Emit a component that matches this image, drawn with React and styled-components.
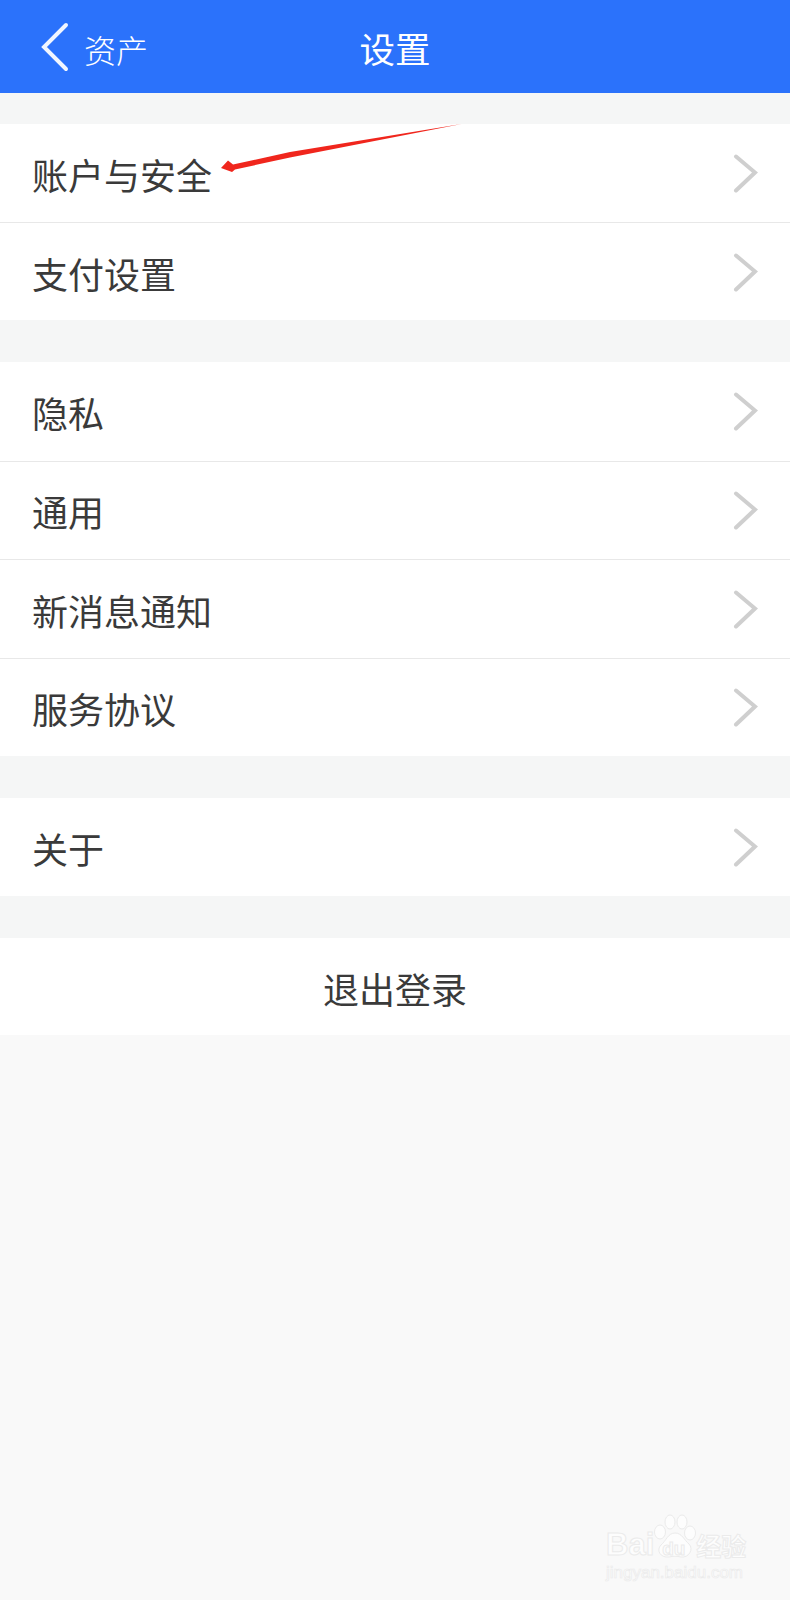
import React from 'react';
import styled, { createGlobalStyle } from 'styled-components';

const GlobalStyle = createGlobalStyle`
  html, body {
    margin: 0;
    padding: 0;
    background: #f9f9f9;
  }
`;

const Page = styled.div`
  position: relative;
  width: 790px;
  height: 1600px;
  overflow: hidden;
  background: #f9f9f9;
  font-family: "Noto Sans CJK SC", "Liberation Sans", sans-serif;
  color: #3a3a3a;
`;

const Header = styled.header`
  display: grid;
  grid-template-columns: 1fr auto 1fr;
  align-items: center;
  height: 93px;
  padding-left: 40px;
  padding-right: 40px;
  background: #2b72fb;
  box-shadow: 0 1px 2px rgba(60, 90, 160, 0.25);
  color: #fff;
`;

const BackLink = styled.div`
  display: flex;
  align-items: center;
  gap: 14px;
  font-size: 32px;
  font-weight: 300;
  line-height: 1;
`;

const BackLabel = styled.span`
  margin-top: 5px;
`;

const Title = styled.div`
  font-size: 35.5px;
  font-weight: 400;
  line-height: 1;
  margin-top: 3px;
`;

const Content = styled.div`
  display: flex;
  flex-direction: column;
  background: #f5f6f6;
  padding-top: 31px;
  gap: 42px;
`;

const Group = styled.section`
  background: #fff;
`;

const Row = styled.div`
  display: flex;
  align-items: center;
  justify-content: space-between;
  height: ${({ $height }) => $height}px;
  box-sizing: border-box;
  padding: 2px 32px 0;
  font-size: 36px;
  font-weight: 400;
  border-top: ${({ $first }) => ($first ? 'none' : '1px solid #e8e8e8')};
`;

const LogoutRow = styled.div`
  display: flex;
  align-items: center;
  justify-content: center;
  height: 97px;
  padding-top: 2px;
  box-sizing: border-box;
  background: #fff;
  font-size: 36px;
  font-weight: 400;
`;

const Annotation = styled.svg`
  position: absolute;
  left: 0;
  top: 0;
  pointer-events: none;
`;

const Watermark = styled.div`
  position: absolute;
  left: 606px;
  top: 1514px;
  width: 146px;
  color: #fdfdfd;
  font-family: "Liberation Sans", "Noto Sans CJK SC", sans-serif;
  -webkit-text-stroke: 1px #ebebeb;
`;

const MarkLine = styled.div`
  display: flex;
  align-items: flex-end;
  height: 46px;
  font-size: 31px;
  font-weight: 700;
  line-height: 30px;
`;

const Paw = styled.span`
  position: relative;
  display: block;
  width: 42px;
  height: 46px;
  flex: none;
`;

const PawText = styled.span`
  position: absolute;
  left: 8px;
  bottom: 1px;
  font-size: 19px;
  line-height: 20px;
`;

const MarkCn = styled.span`
  font-family: "Noto Sans CJK SC", sans-serif;
  font-size: 25px;
  line-height: 30px;
  white-space: nowrap;
`;

const MarkUrl = styled.div`
  margin-top: 4px;
  font-size: 17px;
  line-height: 18px;
  white-space: nowrap;
  -webkit-text-stroke: 0.7px #ebebeb;
`;

const Chevron = () => (
  <svg width="25" height="40" viewBox="0 0 25 40" fill="none">
    <path d="M3 2.5 L22 18.5 L3 36.5" stroke="#cfcfcf" strokeWidth="4" strokeLinecap="round" />
  </svg>
);

const BackIcon = () => (
  <svg width="30" height="50" viewBox="0 0 30 50" fill="none">
    <path d="M26 3 L4 25 L26 47" stroke="#f1f6ff" strokeWidth="4" strokeLinecap="round" />
  </svg>
);

const groups = [
  { rows: ['账户与安全', '支付设置'], height: 98 },
  { rows: ['隐私', '通用', '新消息通知', '服务协议'], height: 98.5 },
  { rows: ['关于'], height: 98 },
];

const App = () => (
  <Page>
    <GlobalStyle />
    <Header>
      <BackLink>
        <BackIcon />
        <BackLabel>资产</BackLabel>
      </BackLink>
      <Title>设置</Title>
    </Header>
    <Content>
      {groups.map(({ rows, height }) => (
        <Group key={rows[0]}>
          {rows.map((label, i) => (
            <Row key={label} $first={i === 0} $height={height}>
              <span>{label}</span>
              <Chevron />
            </Row>
          ))}
        </Group>
      ))}
      <LogoutRow>退出登录</LogoutRow>
    </Content>
    <Annotation width="790" height="200" viewBox="0 0 790 200">
      <path d="M461.5 124 L290 152 L233 164.5 L228 160.5 L221 168 L232 172 L235 169.5 L290 157.5 Z" fill="#f0261d" />
    </Annotation>
    <Watermark>
      <MarkLine>
        <span>Bai</span>
        <Paw>
          <svg width="42" height="46" viewBox="0 0 42 46" fill="#fdfdfd" stroke="#ebebeb" strokeWidth="1">
            <ellipse cx="6" cy="18" rx="5.5" ry="7" />
            <ellipse cx="16" cy="8" rx="5" ry="7" />
            <ellipse cx="28" cy="8" rx="5" ry="7" />
            <ellipse cx="36" cy="19" rx="5.5" ry="7" />
            <path d="M21 19 C28 19 30 26 35 30 C40 35 35 44 27 43 C23 42 19 42 15 43 C6 44 2 36 7 31 C12 27 14 19 21 19 Z" />
          </svg>
          <PawText>du</PawText>
        </Paw>
        <MarkCn>经验</MarkCn>
      </MarkLine>
      <MarkUrl>jingyan.baidu.com</MarkUrl>
    </Watermark>
  </Page>
);

export default App;
